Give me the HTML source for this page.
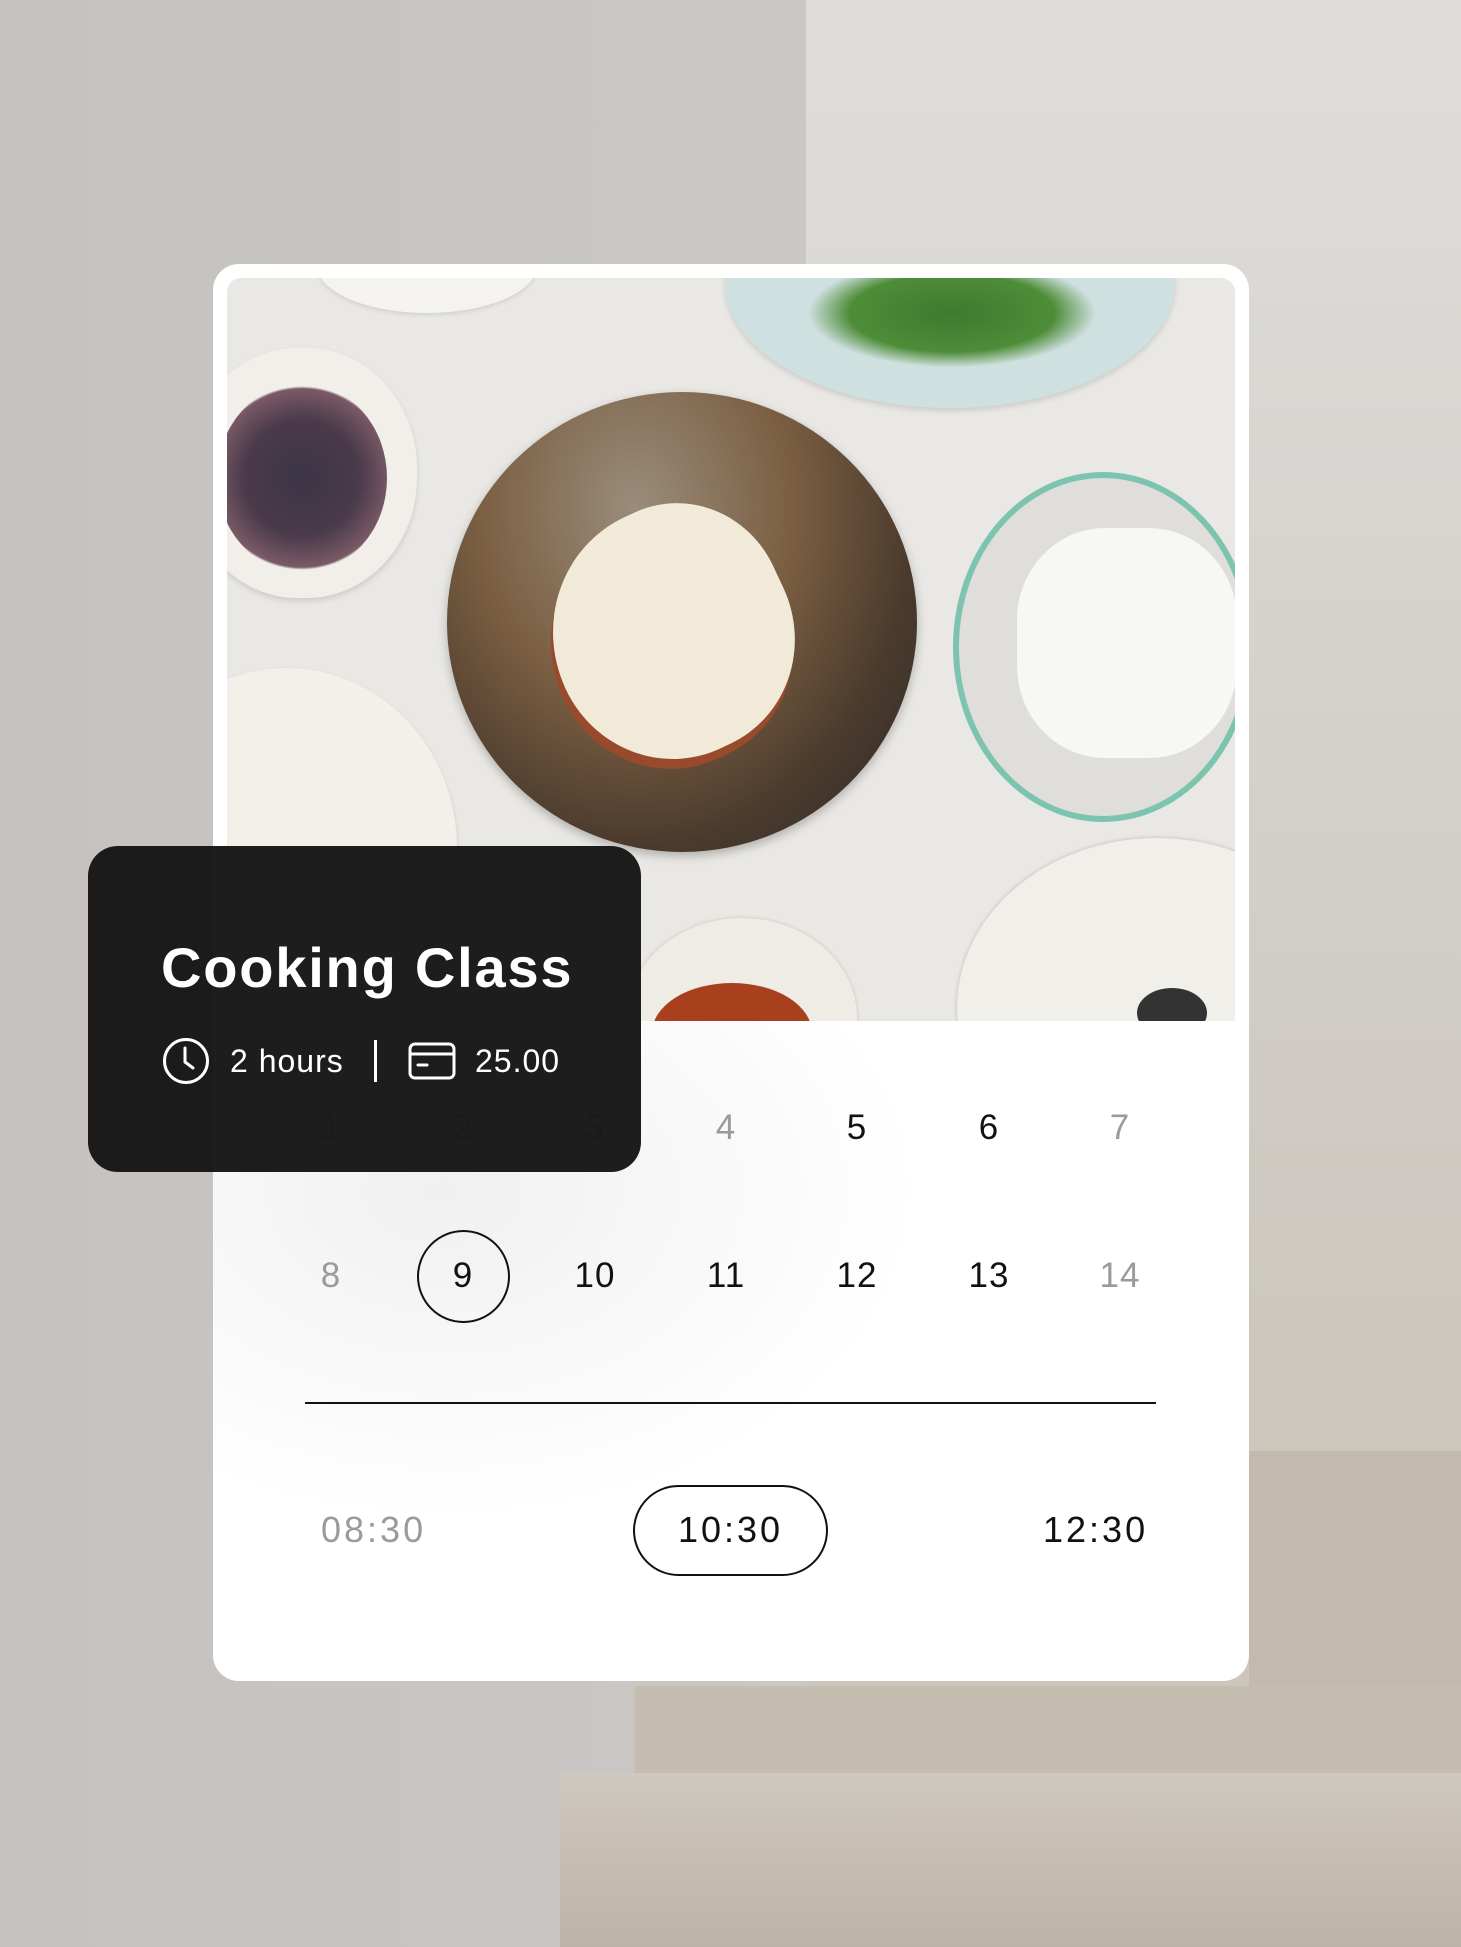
<!DOCTYPE html>
<html><head><meta charset="utf-8"><style>
*{margin:0;padding:0;box-sizing:border-box}
body{width:1461px;height:1947px;position:relative;overflow:hidden;font-family:"Liberation Sans",sans-serif;background:#cbc8c5}
.abs{position:absolute}
.card{left:213px;top:264px;width:1036px;height:1417px;background:#fff;border-radius:26px;overflow:hidden}
.photo{left:14px;top:14px;width:1008px;height:743px;background:#e9e8e4;overflow:hidden;border-radius:14px 14px 0 0}
.shade{left:0;top:757px;width:1036px;height:660px;background:radial-gradient(ellipse 480px 330px at 230px 170px,rgba(0,0,0,.06),rgba(0,0,0,0) 100%)}
.num{position:absolute;width:80px;text-align:center;font-size:35px;letter-spacing:1px;transform:translate(-40px,-50%)}
.g{color:#9a9a9a}.k{color:#111}
.black{left:88px;top:846px;width:553px;height:326px;background:rgba(22,22,22,.97);border-radius:30px;color:#fff}
.t{font-size:36px;line-height:40px;letter-spacing:3px}
</style></head><body>
<div class="abs" style="left:0;top:0;width:806px;height:1947px;background:linear-gradient(90deg,#c5c2bf,#cac7c4)"></div>
<div class="abs" style="left:806px;top:0;width:655px;height:1947px;background:linear-gradient(180deg,#dfddda 0,#d8d5d1 500px,#d0ccc6 1000px,#ccc6bd 1400px)"></div>
<div class="abs" style="left:1249px;top:1451px;width:212px;height:496px;background:#c3b9ac"></div>
<div class="abs" style="left:635px;top:1686px;width:826px;height:90px;background:#c6bdb1"></div>
<div class="abs" style="left:560px;top:1773px;width:901px;height:174px;background:linear-gradient(180deg,#cfc8bf,#bdb3a6)"></div>

<div class="abs card">
 <div class="abs photo">
  <div class="abs" style="left:90px;top:-60px;width:220px;height:95px;border-radius:50%;background:#f4f3f0;box-shadow:0 2px 4px rgba(0,0,0,.1)"></div>
  <div class="abs" style="left:-40px;top:70px;width:230px;height:250px;border-radius:48%;background:#f2efea;box-shadow:0 3px 6px rgba(0,0,0,.12)"></div>
  <div class="abs" style="left:-10px;top:105px;width:170px;height:190px;border-radius:50%;background:radial-gradient(circle,#3b3545 0,#4a3a4a 45%,#7a5a66 70%,rgba(0,0,0,0) 72%)"></div>
  <div class="abs" style="left:-110px;top:390px;width:340px;height:360px;border-radius:50%;background:#f3f0ea;box-shadow:0 2px 5px rgba(0,0,0,.12)"></div>
  <div class="abs" style="left:498px;top:-120px;width:450px;height:250px;border-radius:50%;background:#cfe0e0;box-shadow:0 3px 6px rgba(0,0,0,.12)"></div>
  <div class="abs" style="left:580px;top:-20px;width:290px;height:110px;border-radius:50%;background:radial-gradient(ellipse,#3e7a30 0,#4e8d38 50%,rgba(0,0,0,0) 70%)"></div>
  <div class="abs" style="left:220px;top:114px;width:470px;height:460px;border-radius:50%;background:radial-gradient(ellipse at 40% 25%,#9a8c7a 0,#7a5e42 40%,#4a3a2c 70%,#2a2a2a 100%);box-shadow:0 4px 10px rgba(0,0,0,.25)"></div>
  <div class="abs" style="left:325px;top:230px;width:240px;height:250px;border-radius:55% 45% 50% 50%;background:#f1ead8;box-shadow:-6px 8px 0 #9a4a2c;transform:rotate(-25deg)"></div>
  <div class="abs" style="left:726px;top:194px;width:300px;height:350px;border-radius:50%;background:#e0deda;border:6px solid #7cc4b0"></div>
  <div class="abs" style="left:790px;top:250px;width:220px;height:230px;border-radius:40%;background:#f7f7f5"></div>
  <div class="abs" style="left:730px;top:560px;width:400px;height:340px;border-radius:50%;background:#f1efea;box-shadow:0 0 4px rgba(0,0,0,.2)"></div>
  <div class="abs" style="left:910px;top:710px;width:70px;height:50px;border-radius:50%;background:#333"></div>
  <div class="abs" style="left:400px;top:640px;width:230px;height:200px;border-radius:50%;background:#efece6;box-shadow:0 0 4px rgba(0,0,0,.15)"></div>
  <div class="abs" style="left:425px;top:705px;width:160px;height:100px;border-radius:50%;background:#a8401e"></div>
 </div>
 <div class="abs shade"></div>
 <div class="num g" style="left:118px;top:864px">1</div>
 <div class="num g" style="left:250px;top:864px">2</div>
 <div class="num g" style="left:382px;top:864px">3</div>
 <div class="num g" style="left:513px;top:864px">4</div>
 <div class="num k" style="left:644px;top:864px">5</div>
 <div class="num k" style="left:776px;top:864px">6</div>
 <div class="num g" style="left:907px;top:864px">7</div>
 <div class="num g" style="left:118px;top:1012px">8</div>
 <div class="abs" style="left:204px;top:966px;width:93px;height:93px;border:2px solid #111;border-radius:50%"></div>
 <div class="num k" style="left:250px;top:1012px">9</div>
 <div class="num k" style="left:382px;top:1012px">10</div>
 <div class="num k" style="left:513px;top:1012px">11</div>
 <div class="num k" style="left:644px;top:1012px">12</div>
 <div class="num k" style="left:776px;top:1012px">13</div>
 <div class="num g" style="left:907px;top:1012px">14</div>
 <div class="abs" style="left:92px;top:1138px;width:851px;height:2px;background:#111"></div>
 <div class="abs g t" style="left:108px;top:1246px">08:30</div>
 <div class="abs" style="left:420px;top:1221px;width:195px;height:91px;border:2px solid #111;border-radius:46px"></div>
 <div class="abs k t" style="left:420px;top:1246px;width:195px;text-align:center">10:30</div>
 <div class="abs k t" style="left:830px;top:1246px">12:30</div>
</div>

<div class="abs black">
 <div class="abs" style="left:73px;top:90px;font-size:56px;font-weight:bold;line-height:64px;letter-spacing:1.8px">Cooking Class</div>
 <svg class="abs" style="left:73px;top:190px" width="50" height="50" viewBox="0 0 50 50" fill="none" stroke="#fff" stroke-width="3" stroke-linecap="round"><circle cx="25" cy="25" r="21.5"/><path d="M24 12v14l8 6"/></svg>
 <div class="abs" style="left:142px;top:196px;font-size:32px;line-height:38px;letter-spacing:1px">2 hours</div>
 <div class="abs" style="left:286px;top:194px;width:3px;height:42px;background:#fff"></div>
 <svg class="abs" style="left:320px;top:196px" width="48" height="38" viewBox="0 0 48 38" fill="none" stroke="#fff" stroke-width="3"><rect x="2" y="2" width="44" height="34" rx="5"/><path d="M2 12h44M10 23h9" stroke-linecap="round"/></svg>
 <div class="abs" style="left:387px;top:196px;font-size:32px;line-height:38px;letter-spacing:1px">25.00</div>
</div>
</body></html>
